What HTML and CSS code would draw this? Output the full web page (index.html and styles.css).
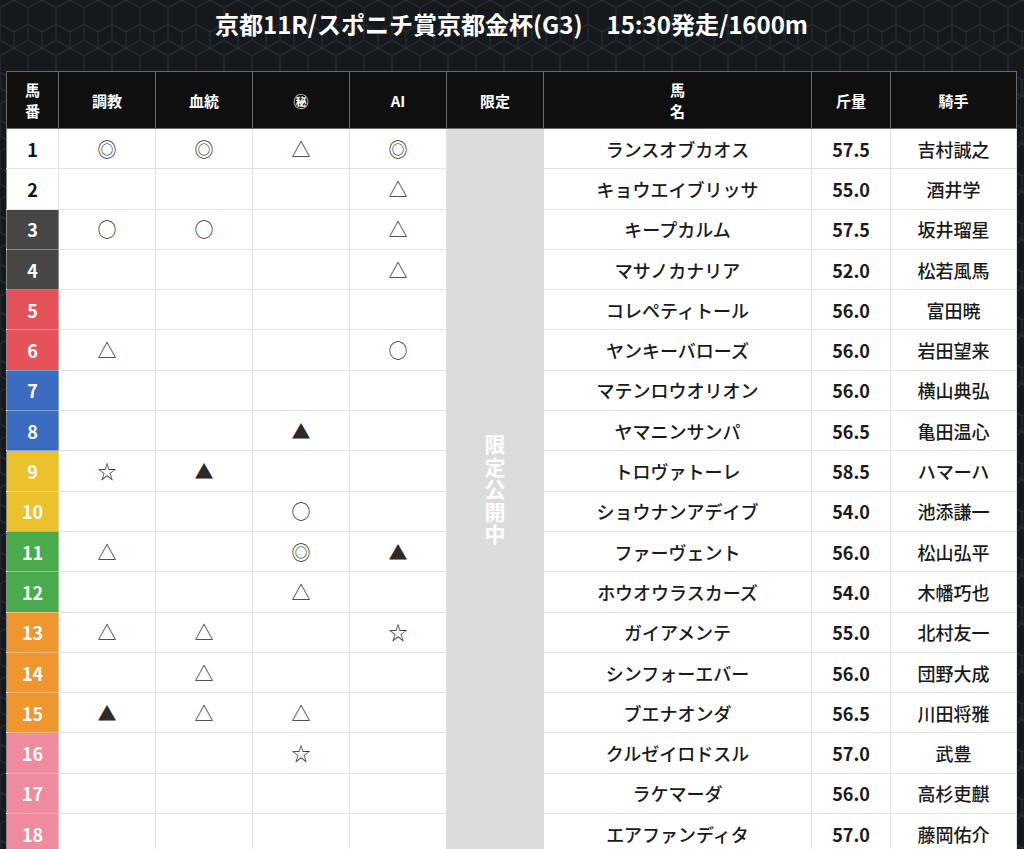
FILE: index.html
```html
<!DOCTYPE html>
<html lang="ja">
<head>
<meta charset="utf-8">
<link rel="stylesheet" href="styles.css">
</head>
<body>
<div class="page">
  <h1 class="title">京都11R/スポニチ賞京都金杯(G3)　15:30発走/1600m</h1>
  <table class="race">
    <colgroup>
      <col class="c-num"><col class="c-mark"><col class="c-mark"><col class="c-mark"><col class="c-mark"><col class="c-mark"><col class="c-name"><col class="c-wt"><col class="c-jk">
    </colgroup>
    <thead>
      <tr>
        <th>馬<br>番</th><th>調教</th><th>血統</th><th>㊙</th><th>AI</th><th>限定</th><th>馬<br>名</th><th>斤量</th><th>騎手</th>
      </tr>
    </thead>
    <tbody>
      <tr><td class="num w1">1</td><td>◎</td><td>◎</td><td>△</td><td>◎</td><td class="locked" rowspan="18"><span>限定公開中</span></td><td class="name">ランスオブカオス</td><td class="wt">57.5</td><td class="jk">吉村誠之</td></tr>
      <tr><td class="num w1">2</td><td></td><td></td><td></td><td>△</td><td class="name">キョウエイブリッサ</td><td class="wt">55.0</td><td class="jk">酒井学</td></tr>
      <tr><td class="num w2">3</td><td>○</td><td>○</td><td></td><td>△</td><td class="name">キープカルム</td><td class="wt">57.5</td><td class="jk">坂井瑠星</td></tr>
      <tr><td class="num w2">4</td><td></td><td></td><td></td><td>△</td><td class="name">マサノカナリア</td><td class="wt">52.0</td><td class="jk">松若風馬</td></tr>
      <tr><td class="num w3">5</td><td></td><td></td><td></td><td></td><td class="name">コレペティトール</td><td class="wt">56.0</td><td class="jk">富田暁</td></tr>
      <tr><td class="num w3">6</td><td>△</td><td></td><td></td><td>○</td><td class="name">ヤンキーバローズ</td><td class="wt">56.0</td><td class="jk">岩田望来</td></tr>
      <tr><td class="num w4">7</td><td></td><td></td><td></td><td></td><td class="name">マテンロウオリオン</td><td class="wt">56.0</td><td class="jk">横山典弘</td></tr>
      <tr><td class="num w4">8</td><td></td><td></td><td>▲</td><td></td><td class="name">ヤマニンサンパ</td><td class="wt">56.5</td><td class="jk">亀田温心</td></tr>
      <tr><td class="num w5">9</td><td>☆</td><td>▲</td><td></td><td></td><td class="name">トロヴァトーレ</td><td class="wt">58.5</td><td class="jk">ハマーハ</td></tr>
      <tr><td class="num w5">10</td><td></td><td></td><td>○</td><td></td><td class="name">ショウナンアデイブ</td><td class="wt">54.0</td><td class="jk">池添謙一</td></tr>
      <tr><td class="num w6">11</td><td>△</td><td></td><td>◎</td><td>▲</td><td class="name">ファーヴェント</td><td class="wt">56.0</td><td class="jk">松山弘平</td></tr>
      <tr><td class="num w6">12</td><td></td><td></td><td>△</td><td></td><td class="name">ホウオウラスカーズ</td><td class="wt">54.0</td><td class="jk">木幡巧也</td></tr>
      <tr><td class="num w7">13</td><td>△</td><td>△</td><td></td><td>☆</td><td class="name">ガイアメンテ</td><td class="wt">55.0</td><td class="jk">北村友一</td></tr>
      <tr><td class="num w7">14</td><td></td><td>△</td><td></td><td></td><td class="name">シンフォーエバー</td><td class="wt">56.0</td><td class="jk">団野大成</td></tr>
      <tr><td class="num w7">15</td><td>▲</td><td>△</td><td>△</td><td></td><td class="name">ブエナオンダ</td><td class="wt">56.5</td><td class="jk">川田将雅</td></tr>
      <tr><td class="num w8">16</td><td></td><td></td><td>☆</td><td></td><td class="name">クルゼイロドスル</td><td class="wt">57.0</td><td class="jk">武豊</td></tr>
      <tr><td class="num w8">17</td><td></td><td></td><td></td><td></td><td class="name">ラケマーダ</td><td class="wt">56.0</td><td class="jk">高杉吏麒</td></tr>
      <tr><td class="num w8">18</td><td></td><td></td><td></td><td></td><td class="name">エアファンディタ</td><td class="wt">57.0</td><td class="jk">藤岡佑介</td></tr>
    </tbody>
  </table>
</div>
</body>
</html>
```

FILE: styles.css
```css
html, body {
  margin: 0;
  padding: 0;
}
body {
  background-color: #15181c;
  background-image: url("data:image/svg+xml,%3Csvg xmlns='http://www.w3.org/2000/svg' width='28' height='48' viewBox='0 0 28 48'%3E%3Cpath d='M14 0 L28 8 L28 24 L14 32 L0 24 L0 8 Z M14 32 L14 48 M0 24 L0 40 M28 24 L28 40 M0 40 L14 48 L28 40' fill='none' stroke='%23282c33' stroke-width='1.3'/%3E%3C/svg%3E");
  font-family: "Noto Sans CJK JP", "Noto Sans", sans-serif;
  color: #222;
  height: 849px;
  overflow: hidden;
}
.page {
  padding: 0 7px 0 6px;
}
.title {
  margin: 0;
  height: 71px;
  box-sizing: border-box;
  padding-top: 6px;
  text-align: center;
  color: #fff;
  font-size: 24px;
  font-weight: 700;
  line-height: 36px;
  letter-spacing: 0;
}
.race {
  width: 1011px;
  table-layout: fixed;
  border-collapse: collapse;
  background: #fff;
  border: 1px solid #8a8a8a;
}
.c-num { width: 52px; }
.c-mark { width: 97px; }
.c-name { width: 268px; }
.c-wt { width: 79px; }
.c-jk { width: 126px; }

.race th {
  background: #0f0f0f;
  color: #fff;
  font-size: 15px;
  font-weight: 700;
  line-height: 21px;
  height: 56px;
  padding: 0;
  border: 1px solid #6a6a6a;
  text-align: center;
  vertical-align: middle;
}
.race td {
  height: 39.3px;
  padding: 0;
  border: 1px solid #e2e2e2;
  text-align: center;
  vertical-align: middle;
  font-size: 19px;
  line-height: 24px;
  color: #2a2a2a;
}
.race td.num {
  font-weight: 700;
  font-size: 18px;
  color: #fff;
  border-color: rgba(255,255,255,0.35);
  border-left: none;
}
.race td.w1 { background: #fff; color: #111; border-color: #e6e6e6; }
.race td.w2 { background: #474747; }
.race td.w3 { background: #e6525a; }
.race td.w4 { background: #3b6cc2; }
.race td.w5 { background: #ebc12e; }
.race td.w6 { background: #4aab4c; }
.race td.w7 { background: #ef962f; }
.race td.w8 { background: #ee8b9f; }

.race td.locked {
  background: #dcdcdc;
  border-color: #dcdcdc;
  padding-top: 2px;
}
.locked span {
  writing-mode: vertical-rl;
  color: #fff;
  font-weight: 700;
  font-size: 21px;
  letter-spacing: 1.5px;
  line-height: 22px;
}
.race td.name, .race td.wt, .race td.jk {
  font-size: 18px;
  font-weight: 500;
  color: #1a1a1a;
}
.race td.wt {
  font-weight: 600;
}
```
